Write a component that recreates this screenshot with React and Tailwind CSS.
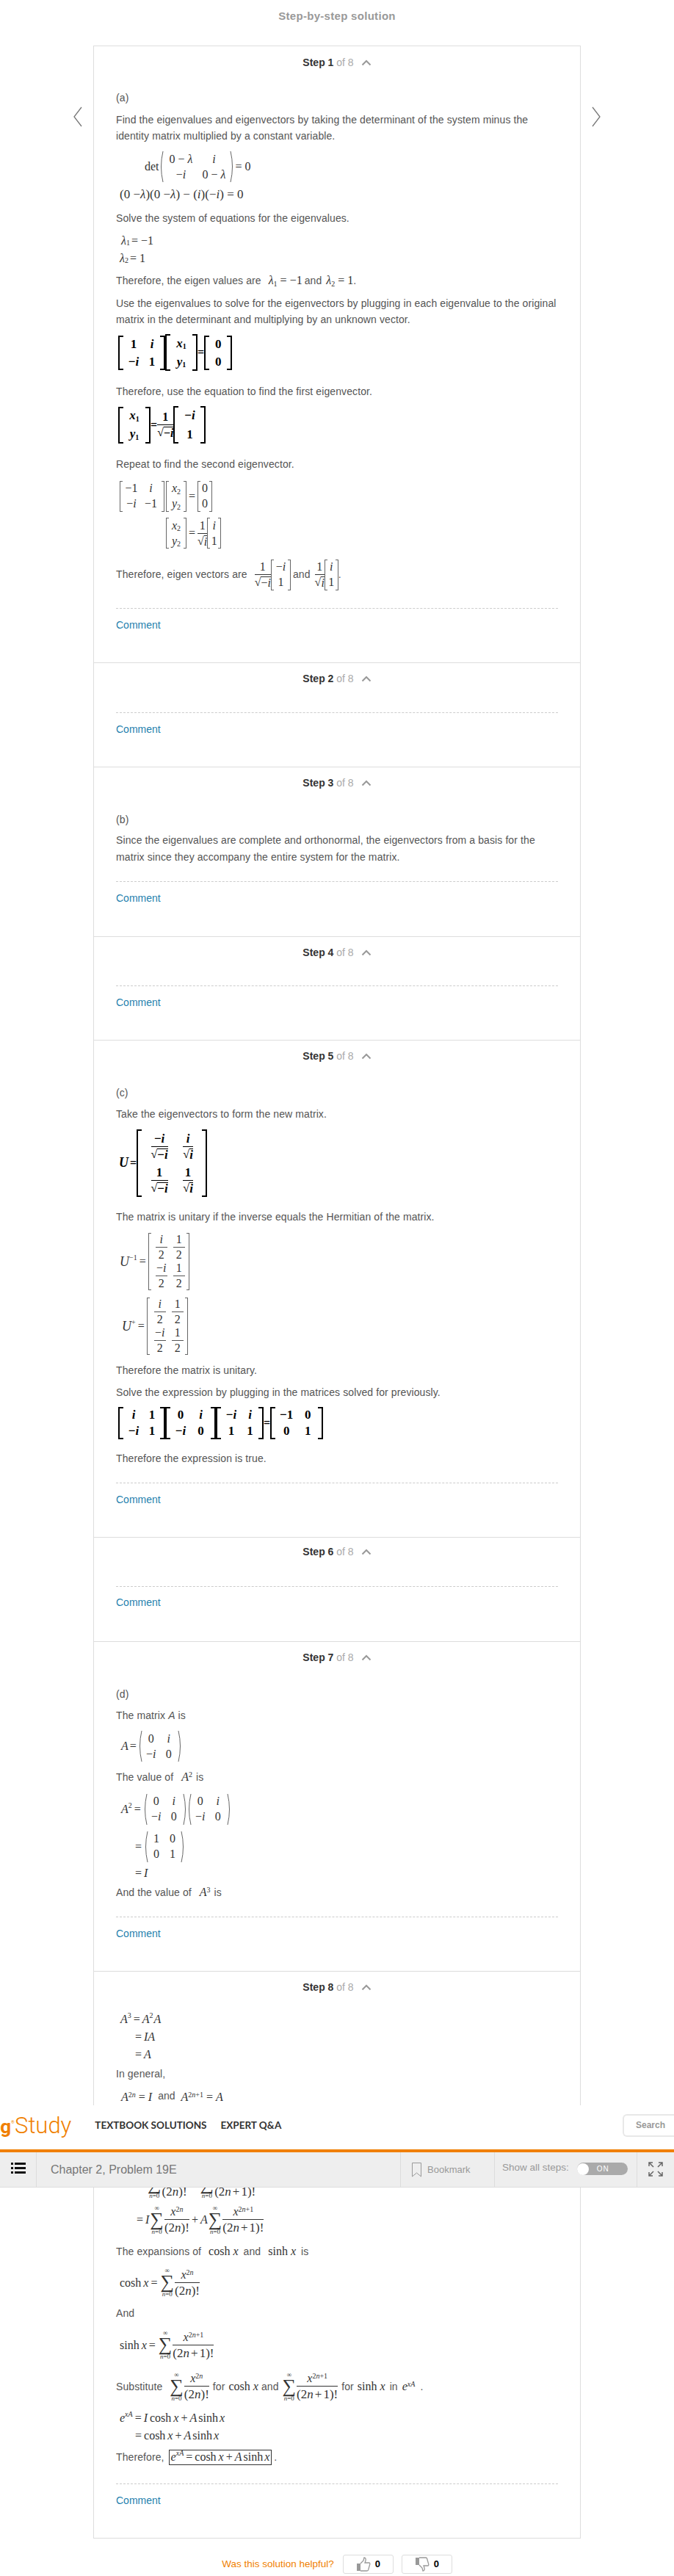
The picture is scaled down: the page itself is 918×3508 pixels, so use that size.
import React from "react";
import clsx from "clsx";

const T = ({ className, children }) => (
  <p className={clsx("leading-[22px] text-[#555] tracking-[0.1px]", className)}>{children}</p>
);

const M = ({ className, children }) => (
  <span className={clsx("[font-family:'Liberation_Serif',serif] text-[16px] leading-none text-[#333] whitespace-nowrap tracking-normal", className)}>
    {children}
  </span>
);

const Sub = ({ children }) => <sub className="text-[10px] leading-none">{children}</sub>;
const Sup = ({ children }) => <sup className="text-[10px] leading-none">{children}</sup>;

const MathRow = ({ className, children }) => (
  <div className={clsx("flex items-center [font-family:'Liberation_Serif',serif] text-[16px] text-[#333] whitespace-nowrap tracking-normal", className)}>
    {children}
  </div>
);

const Paren = ({ right }) => (
  <svg viewBox="0 0 6 42" preserveAspectRatio="none" className="w-[6px] self-stretch shrink-0">
    <path d={right ? "M1 0 Q6 21 1 42" : "M5 0 Q0 21 5 42"} fill="none" stroke="#555" strokeWidth="0.9" vectorEffect="non-scaling-stroke" />
  </svg>
);

// thin matrix in brackets or parens, rows given as arrays
const Matrix = ({ rows, paren, cols = "grid-cols-2", className, cell = "h-[21px]" }) => {
  const body = (
    <span className={clsx("grid items-center justify-items-center", cols, className)}>
      {rows.flat().map((c, i) => (
        <span key={i} className={clsx("flex items-center justify-center", cell)}>{c}</span>
      ))}
    </span>
  );
  if (paren) {
    return (
      <span className="inline-flex">
        <Paren />
        {body}
        <Paren right />
      </span>
    );
  }
  return (
    <span className="inline-flex">
      <span className="w-[4px] border-l border-y border-[#666]" />
      {body}
      <span className="w-[4px] border-r border-y border-[#666]" />
    </span>
  );
};

// the bold black matrices
const BoldMatrix = ({ rows, cols = "grid-cols-2", className, cell = "h-[24px]" }) => (
  <span className="inline-flex font-bold text-black text-[17px]">
    <span className="w-[7px] border-l-[2px] border-y-[2px] border-black" />
    <span className={clsx("grid items-center justify-items-center", cols, className)}>
      {rows.flat().map((c, i) => (
        <span key={i} className={clsx("flex items-center justify-center", cell)}>{c}</span>
      ))}
    </span>
    <span className="w-[7px] border-r-[2px] border-y-[2px] border-black" />
  </span>
);

const Frac = ({ top, bottom, className, line = "border-[#333]" }) => (
  <span className={clsx("inline-flex flex-col items-center leading-none", className)}>
    <span className={clsx("flex justify-center w-full border-b px-[2px] pb-[2px]", line)}>{top}</span>
    <span className="flex justify-center pt-[2px]">{bottom}</span>
  </span>
);

const Sqrt = ({ children }) => (
  <span className="inline-flex items-end">
    <span className="text-[16px] leading-none">√</span>
    <span className="border-t border-current leading-[15px]">{children}</span>
  </span>
);

const Sigma = () => (
  <span className="inline-flex flex-col items-center leading-none mx-[1px]">
    <span className="text-[9px] leading-[8px]">∞</span>
    <span className="text-[26px] leading-[23px]">∑</span>
    <span className="text-[9px] leading-[10px]"><i>n</i>=0</span>
  </span>
);

const X2n = () => (
  <Frac top={<span><i>x</i><Sup>2<i>n</i></Sup></span>} bottom={<span className="text-[17px]">(2<i>n</i>)!</span>} />
);
const X2n1 = () => (
  <Frac
    top={<span><i>x</i><Sup>2<i>n</i>+1</Sup></span>}
    bottom={<span className="text-[17px]">(2<i>n</i><span className="mx-[2px]">+</span>1)!</span>}
  />
);

const i = <i>i</i>;
const neg = <span>−<i>i</i></span>;

const HalfFrac = ({ t }) => <Frac top={t} bottom="2" line="border-[#555]" className="w-[16px]" />;
const halfRows = [
  [<HalfFrac t={i} />, <HalfFrac t="1" />],
  [<HalfFrac t={neg} />, <HalfFrac t="1" />],
];

const Up = () => (
  <svg viewBox="0 0 14 9" className="w-[14px] h-[9px]">
    <path d="M1.5 7.500 L7 2 L12.500 7.500" fill="none" stroke="#999" strokeWidth="2" />
  </svg>
);

const Step = ({ n, head, first, foot, dash, gap, children }) => (
  <section className={clsx("px-[30px]", !first && "border-t border-[#ddd]", foot)}>
    <div className={clsx("-mx-[30px] flex items-center justify-center gap-[10px]", head)}>
      <span>
        <b className="text-[#333] font-bold">Step {n}</b> <span className="text-[#aaa]">of 8</span>
      </span>
      <Up />
    </div>
    {children}
    <div className={clsx("border-t border-dashed border-[#ccc]", dash)} />
    <p className={clsx("leading-[22px] text-[#1f7fae]", gap)}>Comment</p>
  </section>
);

const Chevron = ({ right }) => (
  <svg viewBox="0 0 12 28" className="w-[12px] h-[28px]">
    <path d={right ? "M1 1 L11 14 L1 27" : "M11 1 L1 14 L11 27"} fill="none" stroke="#777" strokeWidth="1.300" />
  </svg>
);

const StickyBar = () => (
  <div className="absolute left-0 top-[2867px] w-full z-10">
    <div className="h-[60px] bg-white flex items-center overflow-hidden">
      <span className="flex items-baseline text-[#f07f00] [font-family:Roboto,sans-serif] leading-none -mt-[6px]">
        <b className="w-[15px] text-right text-[26px] font-bold">g</b>
        <span className="w-[5px] text-[6px] self-start mt-[8px]">®</span>
        <span className="font-light text-[31px]">Study</span>
      </span>
      <span className="ml-[32px] [font-family:Lato,sans-serif] font-bold text-[13.5px] text-[#333] -mt-[6px]">TEXTBOOK SOLUTIONS</span>
      <span className="ml-[19px] [font-family:Lato,sans-serif] font-bold text-[13.5px] text-[#333] -mt-[6px]">EXPERT Q&amp;A</span>
      <span className="ml-auto w-[70px] h-[31px] -mt-[6px] border-2 border-r-0 border-[#e8e8e8] rounded-l-[6px] pl-[16px] leading-[27px] text-[12px] font-bold text-[#999]">Search</span>
    </div>
    <div className="h-[4px] bg-[#f07f00]" />
    <div className="h-[48px] bg-[#eee] border-b border-[#ddd] flex">
      <div className="w-[50px] border-r border-[#ddd] flex items-center justify-center">
        <svg viewBox="0 0 20 16" className="w-[20px] h-[16px] -mt-[4px]">
          <path d="M0 0h3v3H0zM5 0h15v3H5zM0 6h3v3H0zM5 6h15v3H5zM0 12h3v3H0zM5 12h15v3H5z" fill="#111" />
        </svg>
      </div>
      <div className="w-[496px] pl-[19px] border-r border-[#ddd] text-[16px] leading-[48px] text-[#777]">Chapter 2, Problem 19E</div>
      <div className="w-[128px] border-r border-[#ddd] flex items-center pl-[15px] gap-[8px] text-[13px] text-[#999]">
        <svg viewBox="0 0 13 20" className="w-[13px] h-[20px]">
          <path d="M.5.5h12v18.500l-6-5-6 5z" fill="none" stroke="#999" />
        </svg>
        Bookmark
      </div>
      <div className="w-[194px] border-r border-[#ddd] flex items-center pl-[10px] text-[13.5px] text-[#999]">
        <span className="-mt-[4px]">Show all steps:</span>
        <span className="ml-[11px] w-[69px] h-[17px] -mt-[2px] rounded-full bg-[#aaa] flex items-center">
          <span className="w-[16px] h-[16px] rounded-full bg-white" />
          <span className="ml-[11px] text-[10px] tracking-[1px] text-white">ON</span>
        </span>
      </div>
      <div className="flex-1 flex items-center pl-[15px]">
        <svg viewBox="0 0 20 20" className="w-[20px] h-[20px] -mt-[2px]" fill="none" stroke="#666" strokeWidth="1.500">
          <path d="M1 6V1h5M1 1l6 6M14 1h5v5M19 1l-6 6M1 14v5h5M1 19l6-6M14 19h5v-5M19 19l-6-6" />
        </svg>
      </div>
    </div>
  </div>
);

export default function App() {
  return (
    <div className="relative min-h-[3508px] bg-white overflow-hidden [font-family:'Liberation_Sans',Arial,sans-serif] text-[14px]">
      <StickyBar />

      <div className="h-[62px] pt-[12px] text-center text-[15px] tracking-[0.3px] leading-[20px] font-bold text-[#999]">Step-by-step solution</div>

      <div className="flex justify-center">
        <div className="w-[27px] pt-[83px]"><Chevron /></div>

        <div className="w-[664px] border border-[#ddd]">
          {/* Step 1 */}
          <Step n={1} first head="h-[44px]" foot="pb-[40px]" dash="mt-[24px]" gap="mt-[11px]">
            <T className="mt-[15px]">(a)</T>
            <T className="mt-[8px]">Find the eigenvalues and eigenvectors by taking the determinant of the system minus the identity matrix multiplied by a constant variable.</T>
            <MathRow className="mt-[10px] ml-[39px] h-[42px]">
              det
              <Matrix paren rows={[[<span>0 − <i>λ</i></span>, i], [neg, <span>0 − <i>λ</i></span>]]} className="grid-cols-[48px_42px]" />
              <span className="ml-[2px]">= 0</span>
            </MathRow>
            <MathRow className="mt-[6px] ml-[5px] h-[22px] text-[17px]">(0 − <i>λ</i>)(0 − <i>λ</i>) − (<i>i</i>)(−<i>i</i>) = 0</MathRow>
            <T className="mt-[10px]">Solve the system of equations for the eigenvalues.</T>
            <MathRow className="mt-[9px] ml-[7px] h-[22px]"><i>λ</i><Sub>1</Sub><span className="ml-[2px]">= −1</span></MathRow>
            <MathRow className="mt-[2px] ml-[5px] h-[22px]"><i>λ</i><Sub>2</Sub><span className="ml-[2px]">= 1</span></MathRow>
            <T className="mt-[8px] flex items-center">
              Therefore, the eigen values are
              <M className="ml-[10px]"><i>λ</i><Sub>1</Sub> = −1</M>
              <span className="ml-[3px]">and</span>
              <M className="ml-[6px]"><i>λ</i><Sub>2</Sub> = 1</M>.
            </T>
            <T className="mt-[9px]">Use the eigenvalues to solve for the eigenvectors by plugging in each eigenvalue to the original matrix in the determinant and multiplying by an unknown vector.</T>
            <MathRow className="mt-[7px] ml-[3px] h-[54px] font-bold text-black">
              <span className="h-[47px] flex"><BoldMatrix rows={[["1", i], [neg, "1"]]} className="grid-cols-[28px_22px]" /></span>
              <BoldMatrix rows={[[<span><i>x</i><Sub>1</Sub></span>], [<span><i>y</i><Sub>1</Sub></span>]]} cols="grid-cols-1" cell="h-[25px]" className="w-[30px]" />
              =
              <span className="h-[47px] flex"><BoldMatrix rows={[["0"], ["0"]]} cols="grid-cols-1" className="w-[24px]" /></span>
            </MathRow>
            <T className="mt-[15px]">Therefore, use the equation to find the first eigenvector.</T>
            <MathRow className="mt-[7px] ml-[3px] h-[55px] font-bold text-black">
              <BoldMatrix rows={[[<span><i>x</i><Sub>1</Sub></span>], [<span><i>y</i><Sub>1</Sub></span>]]} cols="grid-cols-1" cell="h-[25px]" className="w-[30px]" />
              =
              <Frac top="1" bottom={<Sqrt>−<i>i</i></Sqrt>} line="border-black" />
              <span className="h-[51px] flex"><BoldMatrix rows={[[neg], ["1"]]} cols="grid-cols-1" className="w-[30px]" /></span>
            </MathRow>
            <T className="mt-[15px]">Repeat to find the second eigenvector.</T>
            <MathRow className="mt-[11px] ml-[5px] h-[43px]">
              <Matrix rows={[["−1", i], [neg, "−1"]]} className="grid-cols-[24px_29px]" />
              <span className="w-[2px]" />
              <Matrix rows={[[<span><i>x</i><Sub>2</Sub></span>], [<span><i>y</i><Sub>2</Sub></span>]]} cols="grid-cols-1" className="w-[20px]" />
              <span className="mx-[3px]">=</span>
              <Matrix rows={[["0"], ["0"]]} cols="grid-cols-1" className="w-[12px]" />
            </MathRow>
            <MathRow className="mt-[8px] ml-[68px] h-[42px]">
              <Matrix rows={[[<span><i>x</i><Sub>2</Sub></span>], [<span><i>y</i><Sub>2</Sub></span>]]} cols="grid-cols-1" className="w-[20px]" />
              <span className="mx-[3px]">=</span>
              <Frac top="1" bottom={<Sqrt><i>i</i></Sqrt>} />
              <Matrix rows={[[i], ["1"]]} cols="grid-cols-1" className="w-[11px]" />
            </MathRow>
            <div className="mt-[14px] h-[43px] flex items-center text-[#555] tracking-[0.1px]">
              Therefore, eigen vectors are
              <MathRow className="ml-[10px]">
                <Frac top="1" bottom={<Sqrt>−<i>i</i></Sqrt>} />
                <Matrix rows={[[neg], ["1"]]} cols="grid-cols-1" className="w-[19px]" />
              </MathRow>
              <span className="mx-[3px]">and</span>
              <MathRow className="ml-[3px]">
                <Frac top="1" bottom={<Sqrt><i>i</i></Sqrt>} />
                <Matrix rows={[[i], ["1"]]} cols="grid-cols-1" className="w-[11px]" />
              </MathRow>
              .
            </div>
          </Step>

          <Step n={2} head="h-[42px]" foot="pb-[40px]" dash="mt-[25px]" gap="mt-[11px]" />

          {/* Step 3 */}
          <Step n={3} head="h-[42px]" foot="pb-[41px]" dash="mt-[21px]" gap="mt-[11px]">
            <T className="mt-[18px]">(b)</T>
            <T className="mt-[6px] !leading-[23px]">Since the eigenvalues are complete and orthonormal, the eigenvectors from a basis for the matrix since they accompany the entire system for the matrix.</T>
          </Step>

          <Step n={4} head="h-[42px]" foot="pb-[40px]" dash="mt-[24px]" gap="mt-[11px]" />

          {/* Step 5 */}
          <Step n={5} head="h-[42px]" foot="pb-[40px]" dash="mt-[22px]" gap="mt-[11px]">
            <T className="mt-[18px]">(c)</T>
            <T className="mt-[7px]">Take the eigenvectors to form the new matrix.</T>
            <MathRow className="mt-[7px] ml-[4px] h-[97px] font-bold text-black">
              <i className="text-[18px]">U</i>
              <span className="ml-[2px]">=</span>
              <BoldMatrix
                rows={[
                  [<Frac top={neg} bottom={<Sqrt>−<i>i</i></Sqrt>} line="border-black" />, <Frac top={i} bottom={<Sqrt><i>i</i></Sqrt>} line="border-black" />],
                  [<Frac top="1" bottom={<Sqrt>−<i>i</i></Sqrt>} line="border-black" />, <Frac top="1" bottom={<Sqrt><i>i</i></Sqrt>} line="border-black" />],
                ]}
                className="grid-cols-[44px_34px] px-[2px]"
                cell="h-[46px]"
              />
            </MathRow>
            <T className="mt-[14px]">The matrix is unitary if the inverse equals the Hermitian of the matrix.</T>
            <MathRow className="mt-[10px] ml-[5px] h-[80px]">
              <i className="text-[18px]">U</i><Sup>−1</Sup>
              <span className="mx-[3px]">=</span>
              <Matrix rows={halfRows} className="grid-cols-[28px_20px]" cell="h-[39px]" />
            </MathRow>
            <MathRow className="mt-[8px] ml-[8px] h-[80px]">
              <i className="text-[18px]">U</i><Sup>+</Sup>
              <span className="mx-[3px]">=</span>
              <Matrix rows={halfRows} className="grid-cols-[28px_20px]" cell="h-[39px]" />
            </MathRow>
            <T className="mt-[9px]">Therefore the matrix is unitary.</T>
            <T className="mt-[8px]">Solve the expression by plugging in the matrices solved for previously.</T>
            <MathRow className="mt-[7px] ml-[3px] h-[47px] font-bold text-black">
              <BoldMatrix rows={[[i, "1"], [neg, "1"]]} className="grid-cols-[28px_22px]" cell="h-[22px]" />
              <BoldMatrix rows={[["0", i], [neg, "0"]]} className="grid-cols-[28px_27px]" cell="h-[22px]" />
              <BoldMatrix rows={[[neg, i], ["1", "1"]]} className="grid-cols-[28px_23px]" cell="h-[22px]" />
              =
              <BoldMatrix rows={[["−1", "0"], ["0", "1"]]} className="grid-cols-[30px_28px]" cell="h-[22px]" />
            </MathRow>
            <T className="mt-[14px]">Therefore the expression is true.</T>
          </Step>

          <Step n={6} head="h-[38px]" foot="pb-[42px]" dash="mt-[28px]" gap="mt-[10px]" />

          {/* Step 7 */}
          <Step n={7} head="h-[42px]" foot="pb-[40px]" dash="mt-[22px]" gap="mt-[11px]">
            <T className="mt-[18px]">(d)</T>
            <T className="mt-[7px]">The matrix <i>A</i> is</T>
            <MathRow className="mt-[10px] ml-[7px] h-[42px]">
              <i>A</i><span className="mx-[2px]">=</span>
              <Matrix paren rows={[["0", i], [neg, "0"]]} className="grid-cols-[24px_24px]" />
            </MathRow>
            <T className="mt-[10px] flex items-center">
              The value of
              <M className="ml-[11px]"><i>A</i><Sup>2</Sup></M>
              <span className="ml-[5px]">is</span>
            </T>
            <MathRow className="mt-[11px] ml-[7px] h-[43px]">
              <i>A</i><Sup>2</Sup><span className="mx-[3px]">=</span>
              <Matrix paren rows={[["0", i], [neg, "0"]]} className="grid-cols-[24px_24px]" />
              <Matrix paren rows={[["0", i], [neg, "0"]]} className="grid-cols-[24px_24px]" />
            </MathRow>
            <MathRow className="mt-[8px] ml-[26px] h-[43px]">
              <span className="mr-[3px]">=</span>
              <Matrix paren rows={[["1", "0"], ["0", "1"]]} className="grid-cols-[22px_22px]" />
            </MathRow>
            <MathRow className="mt-[4px] ml-[26px] h-[22px]">= <i className="ml-[3px]">I</i></MathRow>
            <T className="mt-[4px] flex items-center">
              And the value of
              <M className="ml-[11px]"><i>A</i><Sup>3</Sup></M>
              <span className="ml-[5px]">is</span>
            </T>
          </Step>

          {/* Step 8 */}
          <Step n={8} head="h-[42px]" foot="pb-[40px]" dash="mt-[24px]" gap="mt-[11px]">
            <MathRow className="mt-[12px] ml-[6px] h-[22px]"><i>A</i><Sup>3</Sup><span className="mx-[3px]">=</span><i>A</i><Sup>2</Sup><i className="ml-[1px]">A</i></MathRow>
            <MathRow className="mt-[2px] ml-[26px] h-[22px]"><span className="mr-[3px]">=</span><i>IA</i></MathRow>
            <MathRow className="mt-[2px] ml-[26px] h-[22px]"><span className="mr-[3px]">=</span><i>A</i></MathRow>
            <T className="mt-[4px]">In general,</T>
            <div className="mt-[10px] ml-[7px] h-[22px] flex items-center text-[#555]">
              <M><i>A</i><Sup>2<i>n</i></Sup> = <i>I</i></M>
              <span className="mx-[8px] -mt-[4px]">and</span>
              <M><i>A</i><Sup>2<i>n</i>+1</Sup> = <i>A</i></M>
            </div>

            {/* this line sits mostly behind the sticky bar */}
            <MathRow className="mt-[87px] ml-[42px] h-[40px]">
              <Sigma /><X2n />
              <span className="mx-[4px]">+</span>
              <Sigma /><X2n1 />
            </MathRow>
            <MathRow className="mt-[9px] ml-[28px] h-[40px]">
              <span className="mr-[3px]">=</span><i>I</i><Sigma /><X2n />
              <span className="mx-[3px]">+</span><i>A</i><Sigma /><X2n1 />
            </MathRow>
            <T className="mt-[12px] flex items-center">
              The expansions of
              <M className="ml-[10px]">cosh <i>x</i></M>
              <span className="ml-[7px]">and</span>
              <M className="ml-[10px]">sinh <i>x</i></M>
              <span className="ml-[7px]">is</span>
            </T>
            <MathRow className="mt-[11px] ml-[5px] h-[41px]">
              cosh <i className="ml-[3px]">x</i><span className="mx-[3px]">=</span><Sigma /><X2n />
            </MathRow>
            <T className="mt-[10px]">And</T>
            <MathRow className="mt-[12px] ml-[5px] h-[41px]">
              sinh <i className="ml-[3px]">x</i><span className="mx-[3px]">=</span><Sigma /><X2n1 />
            </MathRow>
            <div className="mt-[16px] h-[40px] flex items-center text-[#555] tracking-[0.1px]">
              Substitute
              <MathRow className="ml-[9px]"><Sigma /><X2n /></MathRow>
              <span className="mx-[5px]">for</span>
              <M>cosh <i>x</i></M>
              <span className="mx-[4px]">and</span>
              <MathRow><Sigma /><X2n1 /></MathRow>
              <span className="mx-[5px]">for</span>
              <M>sinh <i>x</i></M>
              <span className="mx-[6px]">in</span>
              <M><i>e</i><Sup><i>xA</i></Sup></M>
              <span className="ml-[7px]">.</span>
            </div>
            <MathRow className="mt-[12px] ml-[5px] h-[22px]">
              <i>e</i><Sup><i>xA</i></Sup><span className="mx-[3px]">=</span><i>I</i><span className="mx-[3px]">cosh</span><i>x</i><span className="mx-[3px]">+</span><i>A</i><span className="mx-[2px]">sinh</span><i>x</i>
            </MathRow>
            <MathRow className="mt-[2px] ml-[26px] h-[22px]">
              <span className="mr-[3px]">=</span>cosh<i className="ml-[3px]">x</i><span className="mx-[3px]">+</span><i>A</i><span className="mx-[2px]">sinh</span><i>x</i>
            </MathRow>
            <div className="mt-[6px] h-[24px] flex items-center text-[#555] tracking-[0.1px]">
              Therefore,
              <MathRow className="ml-[6px] h-[21px] border border-[#333] px-[2px]">
                <i>e</i><Sup><i>xA</i></Sup><span className="mx-[3px]">=</span>cosh<i className="ml-[3px]">x</i><span className="mx-[3px]">+</span><i>A</i><span className="mx-[2px]">sinh</span><i>x</i>
              </MathRow>
              <span className="ml-[3px]">.</span>
            </div>
          </Step>
        </div>

        <div className="w-[27px] pt-[83px] pl-[15px]"><Chevron right /></div>
      </div>

      <div className="mt-[22px] flex justify-center items-center">
        <span className="text-[13.5px] text-[#f07f00]">Was this solution helpful?</span>
        <button className="ml-[12px] w-[69px] h-[26px] border border-[#ddd] rounded-[3px] flex items-center justify-center gap-[6px] text-[13px] font-bold text-black">
          <svg viewBox="0 0 20 20" className="w-[20px] h-[20px]">
            <path d="M1 9h5v10H1z" fill="#999" />
            <path d="M6 9l4-4 1-4c2 0 2.500 2 2 4l-1 3h6c1 0 1 2 .5 3l-2 7c-.5 1-1 1-2 1H6" fill="none" stroke="#999" strokeWidth="1.300" />
          </svg>
          0
        </button>
        <button className="ml-[11px] w-[69px] h-[26px] border border-[#ddd] rounded-[3px] flex items-center justify-center gap-[6px] text-[13px] font-bold text-black">
          <svg viewBox="0 0 20 20" className="w-[20px] h-[20px]">
            <path d="M1 1h5v10H1z" fill="#999" />
            <path d="M6 11l4 4 1 4c2 0 2.500-2 2-4l-1-3h6c1 0 1-2 .5-3l-2-7c-.5-1-1-1-2-1H6" fill="none" stroke="#999" strokeWidth="1.300" />
          </svg>
          0
        </button>
      </div>
    </div>
  );
}
